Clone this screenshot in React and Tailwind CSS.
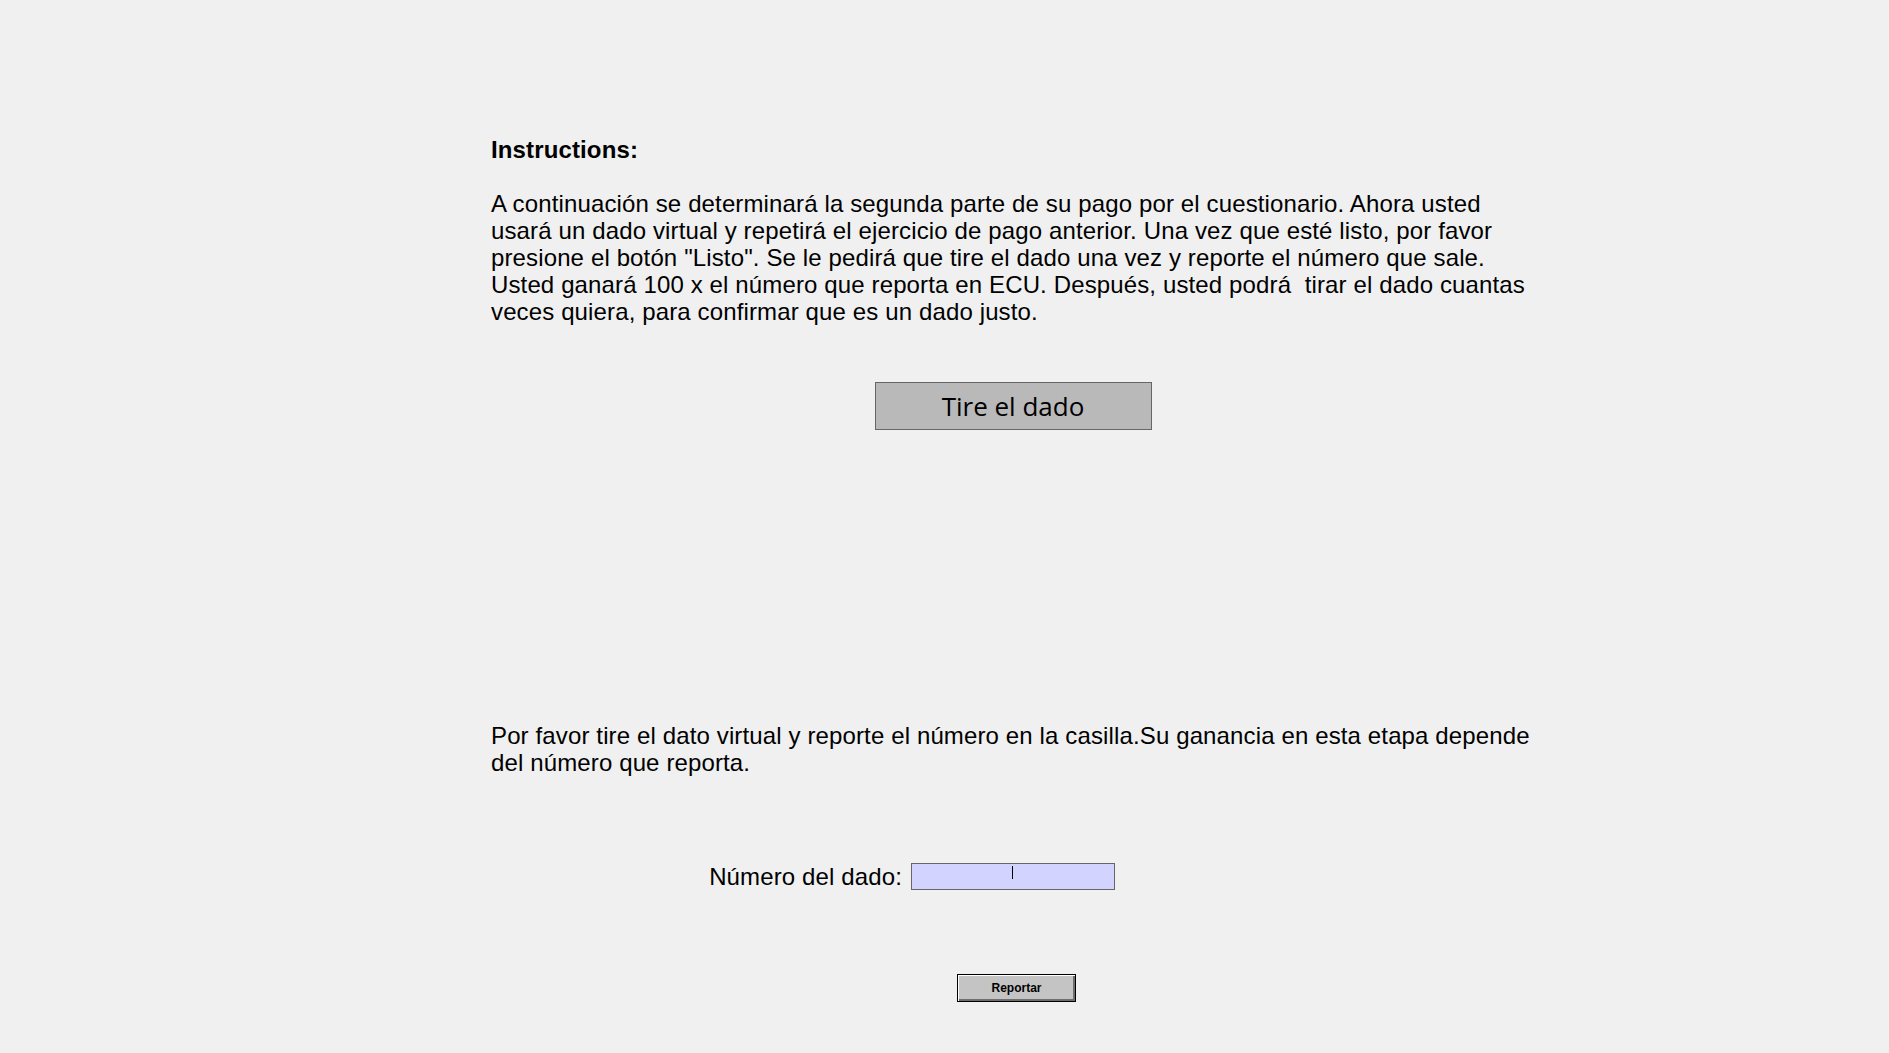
import React, { useState } from 'react';

// Die-roll payment page (second part of the questionnaire)
const App = () => {
    const [numero, setNumero] = useState('');

    return (
        <div className="min-h-screen w-full bg-[#f0f0f0] text-black" style={{ fontFamily: '"Liberation Sans", Arial, sans-serif' }}>
            <div className="ml-[491px] w-[1044px] pt-[136px] text-[24px] leading-[27px] tracking-[0.13px]">
                {/* Instructions */}
                <p className="font-bold">Instructions:</p>
                <p className="mt-[27px]">
                    A continuación se determinará la segunda parte de su pago por el cuestionario. Ahora usted
                    usará un dado virtual y repetirá el ejercicio de pago anterior. Una vez que esté listo, por favor
                    presione el botón "Listo". Se le pedirá que tire el dado una vez y reporte el número que sale.
                    Usted ganará 100 x el número que reporta en ECU. Después, usted podrá&nbsp; tirar el dado cuantas
                    veces quiera, para confirmar que es un dado justo.
                </p>

                {/* Roll button */}
                <div className="mt-[57px] flex justify-center">
                    <button
                        type="button"
                        className="h-[48px] w-[277px] border border-[#666666] bg-[#b9b9b9] pt-[1px] text-[26px] tracking-normal text-black"
                        style={{ fontFamily: '"Open Sans", "Noto Sans", sans-serif' }}
                    >
                        Tire el dado
                    </button>
                </div>

                {/* Report section */}
                <p className="mt-[292px]">
                    Por favor tire el dato virtual y reporte el número en la casilla.Su ganancia en esta etapa depende
                    del número que reporta.
                </p>

                <div className="mt-[87px] grid grid-cols-[1fr_auto_1fr] items-center">
                    <label htmlFor="numero" className="justify-self-end pr-[9px]">Número del dado:</label>
                    <div className="relative h-[27px] w-[204px] border border-[#666666] bg-[#d3d3ff]">
                        <input
                            id="numero"
                            value={numero}
                            onChange={(e) => setNumero(e.target.value)}
                            className="h-full w-full bg-transparent text-center text-[16px] outline-none"
                        />
                        {/* caret */}
                        {numero === '' && (
                            <span className="pointer-events-none absolute left-[100px] top-[2px] h-[13px] w-px bg-black" />
                        )}
                    </div>
                    <div />
                </div>

                <div className="mt-[84px] flex justify-center">
                    <button
                        type="button"
                        className="ml-[7px] h-[28px] w-[119px] border border-black bg-[#c4c4c4] text-[12px] font-bold leading-none tracking-normal text-black shadow-[inset_1px_1px_0_#ffffff,inset_-2px_-2px_0_#6e6e6e]"
                    >
                        Reportar
                    </button>
                </div>
            </div>
        </div>
    );
};

export default App;
